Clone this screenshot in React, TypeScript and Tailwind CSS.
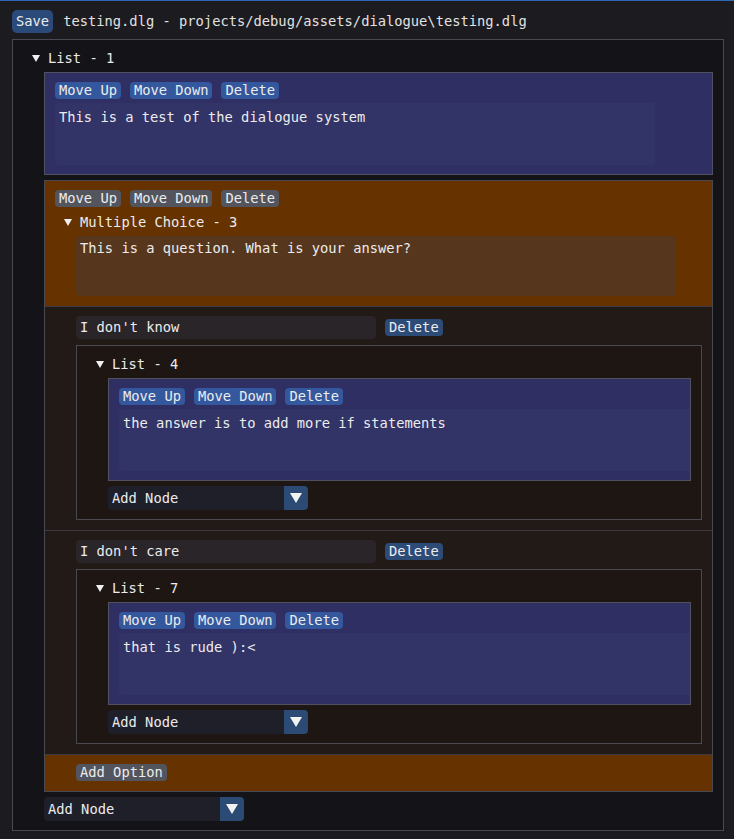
import React from 'react';

const FONT = "font-['DejaVu_Sans_Mono','Liberation_Mono',monospace] text-[13.75px] text-[#ececec]";

function Arrow() {
  return (
    <svg width="8" height="7" viewBox="0 0 8 7" className="shrink-0">
      <path d="M0 0H8L4 7Z" fill="#f0f0f0" />
    </svg>
  );
}

function Btn({ label, color }: { label: string; color: string }) {
  return (
    <div className={`h-[17px] w-fit px-[4px] rounded-[4px] flex items-center leading-none whitespace-pre ${color}`}>
      {label}
    </div>
  );
}

function TreeHeader({ label }: { label: string }) {
  return (
    <div className="h-[18px] flex items-center pl-[19px] gap-[8px] whitespace-pre">
      <Arrow />
      <span>{label}</span>
    </div>
  );
}

function Combo() {
  return (
    <div className="mt-[5px] w-[200px] h-[24px] flex rounded-[4px] overflow-hidden">
      <div className="flex-1 bg-[#1f1f2a] flex items-center pl-[4px]">Add Node</div>
      <div className="w-[24px] bg-[#2b4a74] flex items-center justify-center">
        <svg width="12" height="10" viewBox="0 0 12 10">
          <path d="M0 0H12L6 10Z" fill="#f2f2f2" />
        </svg>
      </div>
    </div>
  );
}

// blue dialogue node; text box is 600px wide and gets clipped in narrow nodes
function ListNode({ text }: { text: string }) {
  return (
    <div className="border border-[#50505e] bg-[#302f63] pt-[9px] pb-[9px] pl-[10px] overflow-hidden">
      <div className="flex gap-[9px]">
        <Btn label="Move Up" color="bg-[#34589d]" />
        <Btn label="Move Down" color="bg-[#34589d]" />
        <Btn label="Delete" color="bg-[#34589d]" />
      </div>
      <div className="mt-[4px] h-[62px] w-[600px] shrink-0 bg-[#323367] rounded-[3px] pl-[4px] pt-[5px] leading-[18px] whitespace-pre">
        {text}
      </div>
    </div>
  );
}

function TreeBox({ label, bg, children }: { label: string; bg: string; children: React.ReactNode }) {
  return (
    <div className={`border border-[#4a4951] pt-[9px] pb-[9px] ${bg}`}>
      <TreeHeader label={label} />
      <div className="ml-[31px] mr-[10px] mt-[5px] flex flex-col">{children}</div>
    </div>
  );
}

function Option({ answer, list, text }: { answer: string; list: string; text: string }) {
  return (
    <div className="pt-[9px] pb-[10px] pl-[31px] pr-[10px] border-b border-[#3c3a42]">
      <div className="flex items-center gap-[9px]">
        <div className="w-[300px] h-[23px] bg-[#2a2529] rounded-[4px] pl-[4px] flex items-center whitespace-pre">
          {answer}
        </div>
        <Btn label="Delete" color="bg-[#2c4b77]" />
      </div>
      <div className="mt-[6px]">
        <TreeBox label={list} bg="bg-[#1e1612]">
          <ListNode text={text} />
          <Combo />
        </TreeBox>
      </div>
    </div>
  );
}

export default function App() {
  return (
    <div className={`w-[734px] h-[839px] bg-[#1c1b20] border-t border-[#2f66b5] pt-[9px] pl-[12px] ${FONT}`}>
      <div className="flex items-center h-[23px]">
        <Btn label="Save" color="bg-[#2a4a79] h-[23px] rounded-[5px]" />
        <span className="ml-[10px] text-[#e2e2e2] whitespace-pre">testing.dlg - projects/debug/assets/dialogue\testing.dlg</span>
      </div>

      <div className="mt-[6px] w-[712px]">
        <TreeBox label="List - 1" bg="bg-[#141418]">
          <ListNode text="This is a test of the dialogue system" />

          <div className="mt-[5px] border border-[#4a4951] flex flex-col">
            <div className="bg-[#663300] pt-[9px] pb-[10px] border-b border-[#3c3a42]">
              <div className="flex gap-[9px] pl-[10px]">
                <Btn label="Move Up" color="bg-[#53555e]" />
                <Btn label="Move Down" color="bg-[#53555e]" />
                <Btn label="Delete" color="bg-[#53555e]" />
              </div>
              <div className="mt-[6px]">
                <TreeHeader label="Multiple Choice - 3" />
              </div>
              <div className="ml-[31px] mt-[5px] w-[600px] h-[60px] bg-[#56371d] rounded-[4px] pl-[4px] pt-[3px] leading-[18px] whitespace-pre">
                This is a question. What is your answer?
              </div>
            </div>
            <div className="bg-[#221a17]">
              <Option answer="I don't know" list="List - 4" text="the answer is to add more if statements" />
              <Option answer="I don't care" list="List - 7" text="that is rude ):<" />
            </div>
            <div className="bg-[#663300] pt-[9px] pb-[10px] pl-[31px]">
              <Btn label="Add Option" color="bg-[#53555e]" />
            </div>
          </div>

          <Combo />
        </TreeBox>
      </div>
    </div>
  );
}
